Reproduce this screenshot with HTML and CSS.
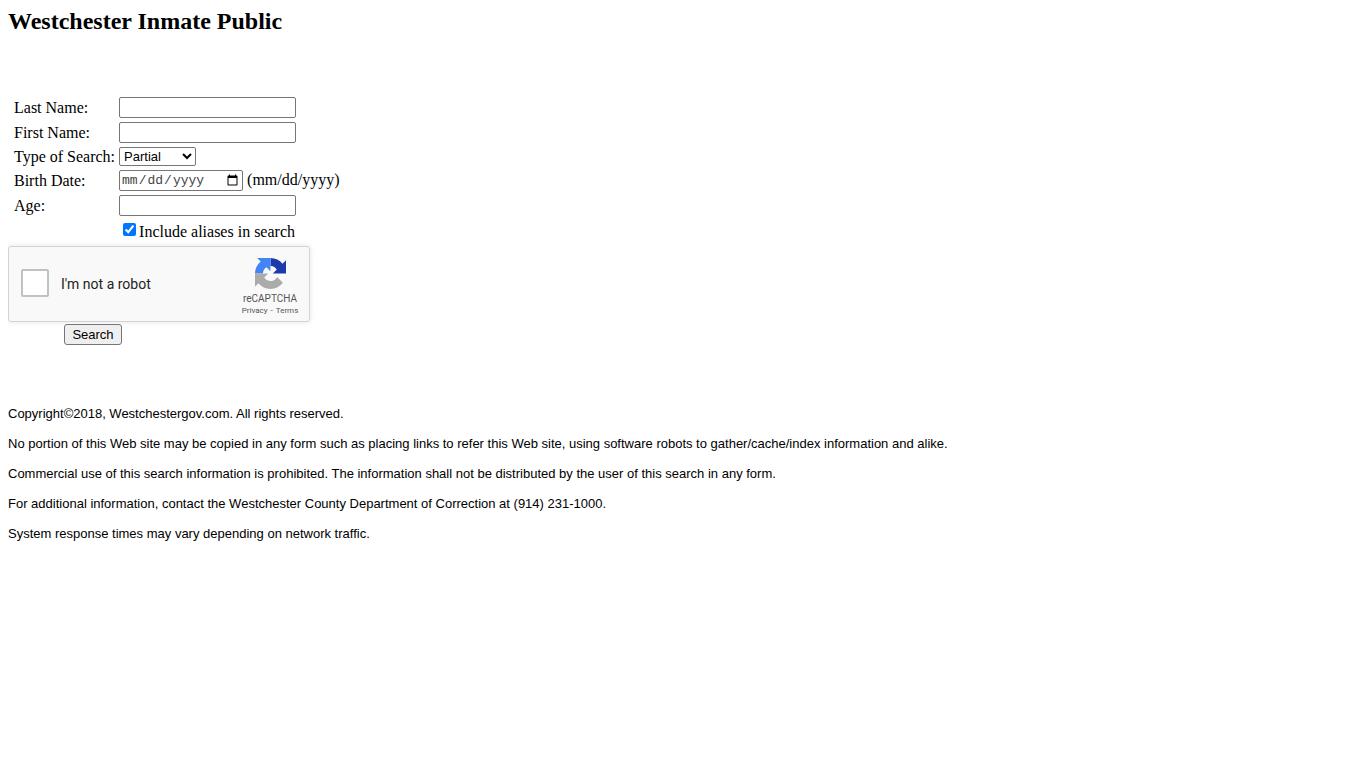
FILE: index.html
```html
<!DOCTYPE html>
<html lang="en">
<head>
<meta charset="utf-8">
<title>Westchester Inmate Public</title>
<link rel="stylesheet" href="styles.css">
</head>
<body>
<h1 class="title">Westchester Inmate Public</h1>
<form class="search-form">
  <div class="fields">
    <label for="last">Last Name:</label>
    <div class="field"><input class="text-box" type="text" id="last"></div>
    <label for="first">First Name:</label>
    <div class="field"><input class="text-box" type="text" id="first"></div>
    <label for="type">Type of Search:</label>
    <div class="field"><select class="type-select" id="type"><option>Partial</option><option>Exact</option></select></div>
    <label for="birth">Birth Date:</label>
    <div class="field"><input class="date-box" type="date" id="birth"><span class="hint">(mm/dd/yyyy)</span></div>
    <label for="age">Age:</label>
    <div class="field"><input class="text-box" type="text" id="age"></div>
    <div class="field aliases"><input class="alias-check" type="checkbox" id="aliases" checked><label for="aliases">Include aliases in search</label></div>
  </div>
  <div class="captcha">
    <input class="robot-check" type="checkbox" id="robot">
    <label class="robot-label" for="robot">I'm not a robot</label>
    <div class="brand">
      <svg class="logo" viewBox="0 0 64 64" aria-hidden="true">
        <path fill="#1c3aa9" d="M64 31.955l-.016-1.37V4.687l-7.16 7.16C50.964 4.674 42.033.093 32.032.093v16.26c.488 0 .865.057 1.142.164 5.004.395 9.341 3.156 11.895 7.164l-8.307 8.307L64 31.955"/>
        <path fill="#4285f4" d="M31.862.094l-1.37.016H4.594l7.16 7.16C4.58 13.13 0 22.061 0 32.062h16.26c0-.488.057-.865.164-1.142.395-5.004 3.156-9.341 7.164-11.895l8.307 8.307L31.862.094"/>
        <path fill="#ababab" d="M.002 32.046l.016 1.37v25.898l7.16-7.16c5.86 7.174 14.791 11.754 24.792 11.754 10.407 0 19.652-4.96 25.481-12.64l-11.736-11.86a15.55 15.55 0 0 1-4.754 5.334c-2.05 1.6-4.952 2.906-8.991 2.906-.488 0-.865-.057-1.142-.164-5.004-.395-9.341-3.156-11.895-7.164l8.307-8.307L.002 32.046"/>
      </svg>
      <span class="brand-name">reCAPTCHA</span>
      <div class="legal"><a href="#">Privacy</a><span>-</span><a href="#">Terms</a></div>
    </div>
  </div>
  <button class="submit" type="button">Search</button>
</form>
<footer class="notes">
  <p>Copyright©2018, Westchestergov.com. All rights reserved.</p>
  <p>No portion of this Web site may be copied in any form such as placing links to refer this Web site, using software robots to gather/cache/index information and alike.</p>
  <p>Commercial use of this search information is prohibited. The information shall not be distributed by the user of this search in any form.</p>
  <p>For additional information, contact the Westchester County Department of Correction at (914) 231-1000.</p>
  <p>System response times may vary depending on network traffic.</p>
</footer>
</body>
</html>
```
FILE: styles.css
```css
body {
  margin: 8px;
  background: #fff;
  color: #000;
  font: 16px/19px "Liberation Serif", "Times New Roman", serif;
}
.title {
  margin: 0 0 62px;
  font-size: 24px;
  line-height: 27px;
}
.fields {
  display: grid;
  grid-template-columns: max-content 1fr;
  column-gap: 4px;
  row-gap: 4px;
  align-items: center;
  padding-left: 6px;
}
.field {
  display: flex;
  align-items: center;
}
.text-box, .date-box, .type-select, .submit {
  box-sizing: border-box;
  margin: 0;
  border: 1px solid #767676;
  border-radius: 2px;
  color: #000;
  font: 13px "Liberation Sans", Arial, sans-serif;
}
.text-box {
  width: 177px;
  height: 21px;
  padding: 1px 2px;
  background: #fff;
}
.type-select {
  width: 77px;
  height: 19px;
  padding: 0;
  background: #fff;
}
.date-box {
  width: 124px;
  height: 21px;
  padding: 0 1px;
  background: #fff;
  color: #444;
  font: 13px "Liberation Mono", "Courier New", monospace;
}
.hint {
  margin-left: 4px;
  padding-bottom: 2px;
}
.aliases {
  grid-column: 2;
  padding-left: 4px;
  height: 22px;
}
.alias-check {
  width: 13px;
  height: 13px;
  margin: 0 3px 3px 0;
}
.captcha {
  display: flex;
  align-items: center;
  box-sizing: border-box;
  width: 302px;
  height: 76px;
  margin-top: 4px;
  padding-left: 12px;
  border: 1px solid #d3d3d3;
  border-radius: 3px;
  background: #f9f9f9;
  box-shadow: 0 0 4px 1px rgba(0, 0, 0, 0.08);
  font-family: Roboto, Arial, sans-serif;
}
.robot-check {
  appearance: none;
  box-sizing: border-box;
  width: 28px;
  height: 28px;
  margin: 0 12px 2px 0;
  border: 2px solid #c1c1c1;
  border-radius: 2px;
  background: #fff;
}
.robot-label {
  flex: 1;
  color: #222;
  font-size: 14px;
}
.brand {
  display: flex;
  flex-direction: column;
  align-items: center;
  width: 78px;
  padding-top: 6px;
  color: #555;
}
.logo {
  width: 31px;
  height: 31px;
}
.brand-name {
  margin-top: 4px;
  font-size: 10px;
  line-height: 12px;
}
.legal {
  display: flex;
  gap: 3px;
  font-size: 8px;
  line-height: 12px;
}
.legal a {
  color: #555;
  text-decoration: none;
}
.submit {
  display: block;
  width: 58px;
  height: 21px;
  margin: 2px 0 0 56px;
  padding: 0;
  border-radius: 3px;
  background: #efefef;
}
.notes {
  margin-top: 61px;
  font: 13px/15px "Liberation Sans", Arial, sans-serif;
}
.notes p {
  margin: 0 0 15px;
}
```
